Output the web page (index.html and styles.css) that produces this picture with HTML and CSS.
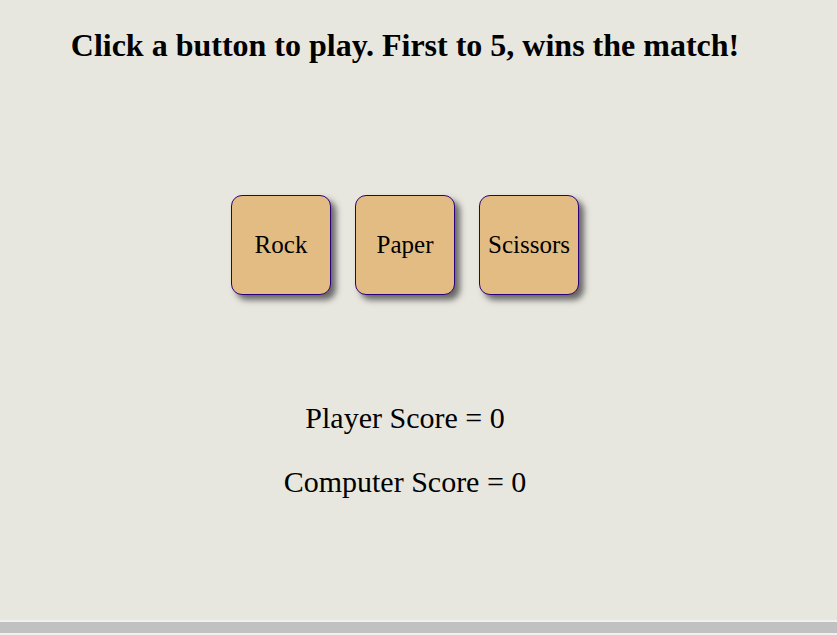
FILE: index.html
```html
<!DOCTYPE html>
<html>
<head>
<meta charset="utf-8">
<title>Rock Paper Scissors</title>
<link rel="stylesheet" href="styles.css">
</head>
<body>
<div class="page">
  <h1 class="title">Click a button to play. First to 5, wins the match!</h1>
  <div class="buttons">
    <button class="choice">Rock</button>
    <button class="choice">Paper</button>
    <button class="choice">Scissors</button>
  </div>
  <div class="scores">
    <p class="score">Player Score = 0</p>
    <p class="score">Computer Score = 0</p>
  </div>
</div>
<div class="hscroll"><div class="hscroll-thumb"></div></div>
</body>
</html>
```
FILE: styles.css
```css
html {
  background: #e8e7df;
}
body {
  margin: 0;
  font-family: "Liberation Serif", "Times New Roman", serif;
  color: #000;
}
.page {
  width: 794px;
  margin-left: 8px;
  text-align: center;
}
.title {
  font-size: 32px;
  font-weight: bold;
  margin: 0;
  padding-top: 27px;
  line-height: 37px;
}
.buttons {
  display: flex;
  justify-content: center;
  gap: 24px;
  margin-top: 131px;
}
.choice {
  width: 100px;
  height: 100px;
  background: #e3bc84;
  border: 1px solid #2a007a;
  border-radius: 11px;
  box-shadow: 5px 5px 6px #666;
  font-family: "Liberation Serif", "Times New Roman", serif;
  font-size: 25px;
  color: #000;
  padding: 0;
}
.scores {
  margin-top: 106px;
}
.score {
  font-size: 30px;
  margin: 0 0 30px 0;
  line-height: 34px;
}
.hscroll {
  position: fixed;
  left: 0;
  right: 0;
  bottom: 0;
  height: 15px;
  background: #f1f1f1;
  padding: 2px 0;
  box-sizing: border-box;
}
.hscroll-thumb {
  height: 11px;
  background: #c1c1c1;
}
```
